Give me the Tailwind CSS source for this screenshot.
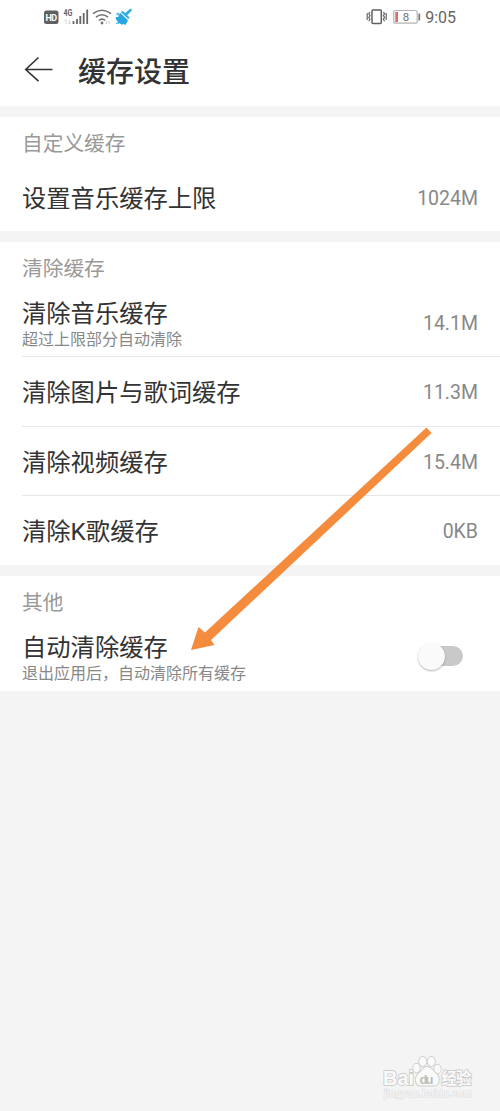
<!DOCTYPE html>
<html lang="zh-CN">
<head>
<meta charset="utf-8">
<title>缓存设置</title>
<script src="https://cdn.jsdelivr.net/npm/@tailwindcss/browser@4"></script>
</head>
<body class="relative w-[500px] h-[1111px] overflow-hidden bg-[#f4f4f4] text-[#333] font-['Roboto','Noto_Sans_CJK_SC',sans-serif]">
<header class="h-[106px] bg-white">
  <div class="flex h-[34px] items-center justify-between pl-[44px] pr-[44px]">
    <svg width="92" height="24" viewBox="44 5 92 24">
      <rect x="44" y="10.500" width="14.500" height="13.500" rx="2.500" fill="#606060"/>
      <text x="45.500" y="20.800" font-size="9" font-weight="700" textLength="11.500" fill="#fff">HD</text>
      <text x="63.500" y="15.800" font-size="9" font-weight="700" textLength="9" lengthAdjust="spacingAndGlyphs" fill="#666">4G</text>
      <path d="M66 20v4m-1.500-3l1.500-1.500M69.500 20v4m-1.200-1.500l1.200 1.500 1.200-1.500" stroke="#ccc" stroke-width=".8" fill="none"/>
      <path d="M73.500 21v3M77 19v5M80.300 16v8M83.700 13v11M87.200 9.500v14.500" stroke="#666" stroke-width="1.800"/>
      <g fill="none" stroke="#707070" stroke-width="1.600"><path d="M93 13.700q9-7 18 0M96 17.200q6-4.800 12 0M98.800 20.500q3.200-2.600 6.400 0"/></g>
      <circle cx="102" cy="23" r="1.400" fill="#707070"/>
      <path d="M106.500 24v-3m2.500 0v3" stroke="#ccc"/>
      <path d="M130.500 8.600l1.700 1.500-5 5.300 2.600 2.200-1.600 1.500-7.300-6.800 1.500-1.500 2.800 2.300z" fill="#35aee4"/>
      <path d="M120 12.800l8 7.400-2.500 4.800-2.500-1.300-.7 1.300-2.800-1.800-1.600.8.200-2.100-1.700-2-.9-3 2.700.2z" fill="#27a6e0"/>
      <circle cx="117.800" cy="14" r="1.500" fill="#58c3ec"/><circle cx="117" cy="23.300" r="1" fill="#58c3ec"/>
    </svg>
    <div class="flex items-center">
      <svg width="56" height="24" viewBox="364 5 56 24">
        <rect x="371" y="10" width="9.300" height="13.500" rx="1" fill="none" stroke="#606060" stroke-width="1.500"/>
        <path d="M369 12l-1.200 1.800 1.200 1.800-1.200 1.800 1.200 1.800-1.200 2M366.200 13v7M382.400 12l1.200 1.800-1.200 1.800 1.200 1.800-1.200 1.800 1.200 2M385.200 13v7" fill="none" stroke="#666" stroke-width="1.200"/>
        <rect x="392.700" y="10.500" width="23.500" height="12.700" rx="2" fill="none" stroke="#b4b4b4" stroke-width="1.200"/>
        <rect x="394.300" y="12" width="2.700" height="10" fill="#e06a6a"/>
        <path d="M418.300 13.500v7" stroke="#777" stroke-width="1.700"/>
        <text x="401.800" y="20.800" font-size="11.500" fill="#707070">8</text>
      </svg>
      <span class="ml-[4px] text-[16px] leading-6 pt-[1px] text-[#666]">9:05</span>
    </div>
  </div>
  <div class="flex h-[72px] items-center pl-[24px]">
    <svg width="30" height="28" viewBox="0 0 30 28" fill="none" stroke="#333" stroke-width="1.600"><path d="M28.500 13.500H1.700M14.500 1.500L1.700 13.500l12.800 11.700"/></svg>
    <h1 class="ml-[24px] pt-[5px] text-[28px] leading-10 font-medium">缓存设置</h1>
  </div>
</header>

<main>
  <section class="mt-[11px] h-[114px] bg-white">
    <h2 class="flex h-[52px] items-center pt-[3px] pl-[22px] text-[20.700px] text-[#999]">自定义缓存</h2>
    <div class="flex h-[58px] items-center justify-between pl-[22px] pr-[22px]">
      <span class="pt-[3px] text-[24.300px]">设置音乐缓存上限</span><span class="pt-[1px] text-[19.500px] text-[#888]">1024M</span>
    </div>
  </section>

  <section class="mt-[11px] h-[323px] bg-white">
    <h2 class="flex h-[52px] items-center pt-[4px] pl-[22px] text-[20.700px] text-[#999]">清除缓存</h2>
    <div class="ml-[22px] flex h-[63px] justify-between border-b border-[#e8e8e8] pr-[22px]">
      <div class="pt-[4px]">
        <div class="text-[24.300px] leading-[32px]">清除音乐缓存</div>
        <div class="text-[16px] leading-[20px] text-[#888]">超过上限部分自动清除</div>
      </div>
      <span class="text-[19.500px] leading-[60px] text-[#888]">14.1M</span>
    </div>
    <div class="ml-[22px] flex h-[70px] items-center justify-between border-b border-[#e8e8e8] pr-[22px]">
      <span class="pt-[4px] text-[24.300px]">清除图片与歌词缓存</span><span class="pt-[3px] text-[19.500px] text-[#888]">11.3M</span>
    </div>
    <div class="ml-[22px] flex h-[69px] items-center justify-between border-b border-[#e8e8e8] pr-[22px]">
      <span class="pt-[4px] text-[24.300px]">清除视频缓存</span><span class="pt-[3px] text-[19.500px] text-[#888]">15.4M</span>
    </div>
    <div class="ml-[22px] flex h-[69px] items-center justify-between pr-[22px]">
      <span class="pt-[4px] text-[24.300px]">清除K歌缓存</span><span class="pt-[3px] text-[19.500px] text-[#888]">0KB</span>
    </div>
  </section>

  <section class="mt-[11px] h-[115px] bg-white">
    <h2 class="flex h-[52px] items-center pt-[4px] pl-[22px] text-[20.700px] text-[#999]">其他</h2>
    <div class="ml-[22px] flex h-[63px] justify-between pr-[37px]">
      <div class="pt-[4px]">
        <div class="text-[24.300px] leading-[32px]">自动清除缓存</div>
        <div class="text-[16px] leading-[20px] text-[#888]">退出应用后，自动清除所有缓存</div>
      </div>
      <div class="mt-[18px] flex h-[20px] w-[42px] items-center rounded-full bg-[#c9c9c9]">
        <div class="-ml-[3px] h-[27px] w-[27px] shrink-0 rounded-full bg-[#fafafa] shadow-[0_1px_2px_rgba(0,0,0,0.3)]"></div>
      </div>
    </div>
  </section>
</main>

<svg class="absolute left-0 top-0" width="500" height="1111" viewBox="0 0 500 1111">
  <path d="M426.500 427.500L431.500 433 211 640 214.500 645 191 650 198.500 627 205 632.500z" fill="#f58b3c"/>
  <g stroke="#cdcdcd" stroke-width="1.800" fill="#fafafa" paint-order="stroke" stroke-linejoin="round">
    <text x="383" y="1085" font-size="20" font-weight="700" textLength="31" font-family="Liberation Sans">Bai</text>
    <ellipse cx="416.500" cy="1068" rx="3.200" ry="4.300"/><ellipse cx="422.700" cy="1061.500" rx="3.600" ry="4.600"/><ellipse cx="431.300" cy="1061.500" rx="3.600" ry="4.600"/><ellipse cx="437.500" cy="1069" rx="3.200" ry="4.300"/>
    <path d="M427 1067c-4 0-5 4-8 6.500-5 4-4 12 2 12h13c6 0 6-8 2-12-3-2.500-5-6.500-9-6.500z"/>
    <text x="441.500" y="1084" font-size="15.500" font-weight="700" textLength="30" font-family="Noto Sans CJK SC">经验</text>
    <text x="384" y="1097" font-size="10.500" textLength="88" stroke="#dedede" stroke-width="1.200" font-family="Liberation Sans">jingyan.baidu.com</text>
  </g>
  <text x="419.500" y="1083.500" font-size="13" font-weight="700" fill="#bdbdbd" textLength="14" font-family="Liberation Sans">du</text>
</svg>
</body>
</html>
